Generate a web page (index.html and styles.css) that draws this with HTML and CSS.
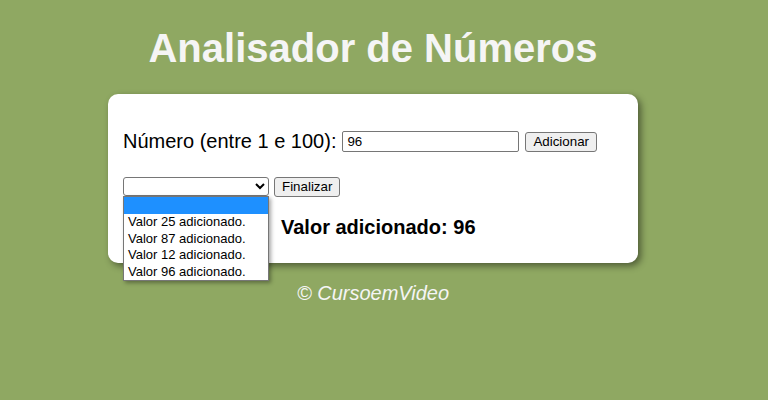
FILE: index.html
```html
<!DOCTYPE html>
<html lang="pt-BR">
<head>
<meta charset="utf-8">
<title>Analisador de Números</title>
<link rel="stylesheet" href="styles.css">
</head>
<body>
<div class="page">
  <header class="header">
    <h1 class="title">Analisador de Números</h1>
  </header>
  <section class="card">
    <div class="row row-first">
      <label class="label" for="num">Número (entre 1 e 100):</label>
      <input class="field" type="number" id="num" value="96">
      <button class="btn">Adicionar</button>
    </div>
    <div class="row row-second">
      <div class="select-wrap">
        <select class="select" size="1"><option></option></select>
        <div class="listbox">
          <div class="opt opt-selected"></div>
          <div class="opt">Valor 25 adicionado.</div>
          <div class="opt">Valor 87 adicionado.</div>
          <div class="opt">Valor 12 adicionado.</div>
          <div class="opt">Valor 96 adicionado.</div>
        </div>
      </div>
      <button class="btn">Finalizar</button>
    </div>
    <div class="result">Valor adicionado: 96</div>
  </section>
  <footer class="footer">© CursoemVideo</footer>
</div>
</body>
</html>
```

FILE: styles.css
```css
html, body {
  margin: 0;
  padding: 0;
}
body {
  background: #8fa862;
  font-family: "Liberation Sans", Arial, sans-serif;
  width: 768px;
  height: 400px;
  overflow: hidden;
}
.page {
  width: 746px;
}
.header {
  padding-top: 25px;
}
.title {
  margin: 0;
  text-align: center;
  color: #f5f5f5;
  font-size: 40px;
  font-weight: bold;
  line-height: 46px;
}
.card {
  width: 500px;
  margin: 23px auto 0;
  background: #ffffff;
  border-radius: 10px;
  box-shadow: 3px 3px 7px rgba(0, 0, 0, 0.45);
  padding: 36px 15px 24px;
}
.row {
  display: flex;
  align-items: center;
}
.row-first {
  height: 23px;
}
.label {
  font-size: 20px;
  color: #000;
  margin-right: 6px;
}
.field {
  box-sizing: border-box;
  width: 177px;
  height: 21px;
  border: 1px solid #767676;
  border-radius: 2px;
  padding: 1px 4px;
  font-family: "Liberation Sans", Arial, sans-serif;
  font-size: 13.33px;
  margin: 0 6px 0 0;
  -moz-appearance: textfield;
}
.field::-webkit-outer-spin-button,
.field::-webkit-inner-spin-button {
  -webkit-appearance: none;
  margin: 0;
}
.btn {
  box-sizing: border-box;
  height: 20px;
  background: #efefef;
  border: 1px solid #767676;
  border-radius: 3px;
  padding: 0 7px;
  font-family: "Liberation Sans", Arial, sans-serif;
  font-size: 13.33px;
  color: #000;
  margin: 0;
}
.row-second {
  margin-top: 23px;
  height: 21px;
}
.select-wrap {
  position: relative;
  margin-right: 5px;
}
.select {
  display: block;
  box-sizing: border-box;
  width: 146px;
  height: 19px;
  border: 1px solid #767676;
  border-radius: 3px;
  background: #fff;
  font-family: "Liberation Sans", Arial, sans-serif;
  font-size: 13px;
  margin: 0;
}
.listbox {
  position: absolute;
  left: 0;
  top: 19px;
  width: 146px;
  box-sizing: border-box;
  background: #fff;
  border: 1px solid #767676;
  box-shadow: 2px 2px 4px rgba(0, 0, 0, 0.35);
  z-index: 5;
}
.opt {
  height: 16.5px;
  line-height: 16.5px;
  padding-left: 4px;
  font-size: 13px;
  color: #000;
  white-space: nowrap;
}
.opt-selected {
  background: #1e90ff;
  height: 17px;
}
.result {
  margin-top: 19px;
  padding-left: 158px;
  font-size: 20px;
  font-weight: bold;
  line-height: 23px;
  color: #000;
}
.footer {
  margin-top: 19px;
  text-align: center;
  font-size: 20px;
  font-style: italic;
  color: #f5f5f5;
  line-height: 23px;
}
```
